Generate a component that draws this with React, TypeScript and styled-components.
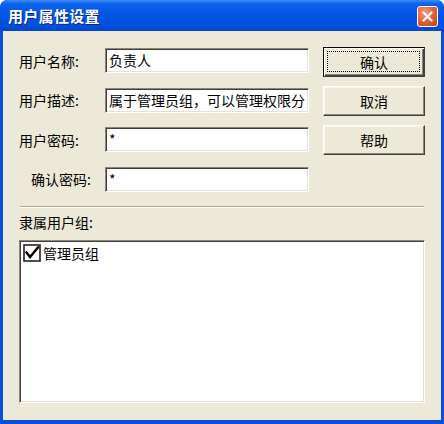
import React from "react";
import styled, { createGlobalStyle } from "styled-components";

const GlobalStyle = createGlobalStyle`
  html, body { margin: 0; padding: 0; background: #ffffff; }
  * { box-sizing: border-box; }
  body { font-family: "Noto Sans CJK SC", "Noto Sans", sans-serif; }
`;

const Window = styled.div`
  width: 444px;
  height: 424px;
  display: flex;
  flex-direction: column;
  background: #0a4fdc;
  border-radius: 7px 7px 0 0;
  padding: 0 3px 4px 3px;
  overflow: hidden;
`;

const TitleBar = styled.div`
  height: 31px;
  margin: 0 -3px;
  padding: 0 8px 0 8px;
  display: flex;
  align-items: center;
  justify-content: space-between;
  border-radius: 7px 7px 0 0;
  background: linear-gradient(
    180deg,
    #3d8cf6 0%,
    #0d62ec 12%,
    #0455e4 45%,
    #0250e0 80%,
    #0346c9 100%
  );
`;

const Title = styled.span`
  color: #ffffff;
  font-size: 15px;
  font-weight: 700;
  letter-spacing: 0.3px;
  text-shadow: 1px 1px 0 #0a2a80;
  line-height: 1;
`;

const CloseButton = styled.div`
  width: 21px;
  height: 21px;
  margin-top: 2px;
  margin-right: -2px;
  border: 1px solid #ffffff;
  border-radius: 3px;
  background: radial-gradient(circle at 35% 30%, #f29b7e 0%, #e0613c 50%, #c2401b 100%);
  display: flex;
  align-items: center;
  justify-content: center;
`;

const Client = styled.div`
  flex: 1;
  background: #ece9d8;
  padding: 16px 16px 17px 16px;
  display: flex;
  flex-direction: column;
`;

const TopSection = styled.div`
  display: flex;
  justify-content: space-between;
`;

const Form = styled.div`
  display: flex;
  flex-direction: column;
  gap: 14.5px;
  margin-top: 1px;
`;

const Row = styled.div`
  display: flex;
  align-items: center;
`;

const Label = styled.span<{ $indent?: number }>`
  width: 86px;
  padding-left: ${(p) => p.$indent ?? 0}px;
  font-size: 14px;
  color: #000;
  line-height: 18px;
  white-space: nowrap;
`;

const Field = styled.div`
  width: 204px;
  height: 25px;
  background: #ffffff;
  border-top: 1px solid #8a8778;
  border-left: 1px solid #8a8778;
  border-right: 1px solid #ffffff;
  border-bottom: 1px solid #ffffff;
  box-shadow: inset 1px 1px 0 #404040, inset -1px -1px 0 #e4e2d6;
  padding: 1px 0 0 3px;
  font-size: 14px;
  line-height: 20px;
  color: #000;
  white-space: nowrap;
  overflow: hidden;
`;

const Buttons = styled.div`
  display: flex;
  flex-direction: column;
  gap: 9px;
`;

const Button = styled.div<{ $default?: boolean }>`
  width: 102px;
  height: 30px;
  background: #ece9d8;
  display: flex;
  align-items: center;
  justify-content: center;
  font-size: 14px;
  color: #000;
  position: relative;
  border-top: 1px solid ${(p) => (p.$default ? "#000" : "#ffffff")};
  border-left: 1px solid ${(p) => (p.$default ? "#000" : "#ffffff")};
  border-right: 1px solid #404040;
  border-bottom: 1px solid #404040;
  box-shadow: ${(p) =>
    p.$default
      ? "inset 1px 1px 0 #ffffff, inset -1px -1px 0 #404040, inset -2px -2px 0 #8a8778"
      : "inset -1px -1px 0 #8a8778, inset 1px 1px 0 #f6f5ee"};
`;

const FocusRing = styled.span`
  position: absolute;
  inset: 3px 4px 4px 3px;
  border: 1px dotted #000;
  pointer-events: none;
`;

const Separator = styled.div`
  margin: 14px 1px 0 1px;
  height: 2px;
  border-top: 1px solid #aca899;
  border-bottom: 1px solid #ffffff;
`;

const GroupLabel = styled.div`
  margin-top: 5px;
  font-size: 14px;
  line-height: 18px;
  color: #000;
`;

const ListBox = styled.div`
  flex: 1;
  margin-top: 9px;
  background: #ffffff;
  border-top: 1px solid #8a8778;
  border-left: 1px solid #8a8778;
  border-right: 1px solid #ffffff;
  border-bottom: 1px solid #ffffff;
  box-shadow: inset 1px 1px 0 #404040, inset -1px -1px 0 #e4e2d6;
  padding: 3px 2px 0 3px;
`;

const ListItem = styled.div`
  display: flex;
  align-items: center;
  gap: 2px;
  font-size: 14px;
  line-height: 18px;
  color: #000;
`;

const CheckIcon = () => (
  <svg width="18" height="18" viewBox="0 0 18 18">
    <rect x="1" y="1" width="16" height="16" fill="#fff" stroke="#222" strokeWidth="1.6" />
    <path d="M3.5 8.5 L7 13 L15 3.5" fill="none" stroke="#000" strokeWidth="2.4" strokeLinecap="square" />
  </svg>
);

const CloseIcon = () => (
  <svg width="11" height="11" viewBox="0 0 11 11">
    <path d="M1.5 1.5 L9.5 9.5 M9.5 1.5 L1.5 9.5" stroke="#fff" strokeWidth="2.2" strokeLinecap="round" />
  </svg>
);

export default function App() {
  return (
    <>
      <GlobalStyle />
      <Window>
        <TitleBar>
          <Title>用户属性设置</Title>
          <CloseButton>
            <CloseIcon />
          </CloseButton>
        </TitleBar>
        <Client>
          <TopSection>
            <Form>
              <Row>
                <Label>用户名称:</Label>
                <Field>负责人</Field>
              </Row>
              <Row>
                <Label>用户描述:</Label>
                <Field>属于管理员组，可以管理权限分</Field>
              </Row>
              <Row>
                <Label>用户密码:</Label>
                <Field>*</Field>
              </Row>
              <Row>
                <Label $indent={12}>确认密码:</Label>
                <Field>*</Field>
              </Row>
            </Form>
            <Buttons>
              <Button $default>
                确认
                <FocusRing />
              </Button>
              <Button>取消</Button>
              <Button>帮助</Button>
            </Buttons>
          </TopSection>
          <Separator />
          <GroupLabel>隶属用户组:</GroupLabel>
          <ListBox>
            <ListItem>
              <CheckIcon />
              管理员组
            </ListItem>
          </ListBox>
        </Client>
      </Window>
    </>
  );
}
